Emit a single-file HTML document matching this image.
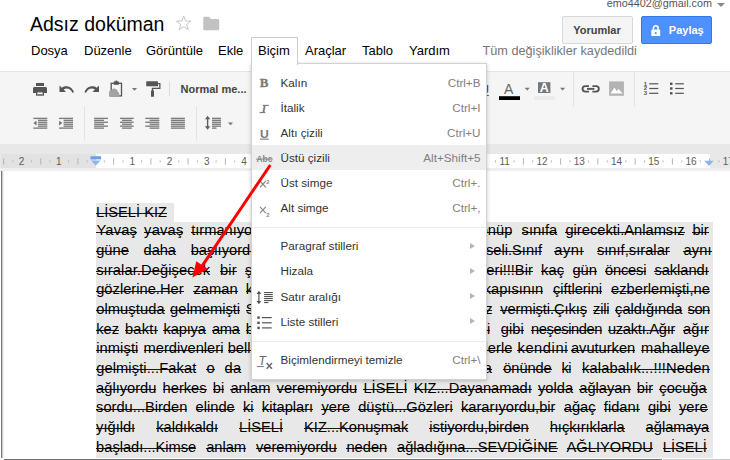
<!DOCTYPE html>
<html lang="tr">
<head>
<meta charset="utf-8">
<title>Adsız doküman</title>
<style>
html,body{margin:0;padding:0;}
body{width:730px;height:460px;overflow:hidden;position:relative;background:#fff;font-family:"Liberation Sans",sans-serif;font-size:13px;color:#000;}
.abs{position:absolute;}
#email{right:18px;top:-3.8px;font-size:10.8px;color:#555;line-height:15px;white-space:nowrap;}
#emarrow{left:717px;top:3px;width:0;height:0;border-left:4px solid transparent;border-right:4px solid transparent;border-top:4px solid #888;}
#title{left:30px;top:11.7px;font-size:19.5px;line-height:24px;color:#000;white-space:nowrap;}
#star{left:174px;top:11px;font-size:17px;line-height:22px;color:#bbb;}
#folder{left:203px;top:16px;}
.btn{top:16px;height:26px;box-sizing:content-box;border:1px solid #d8d8d8;border-radius:2px;font-weight:bold;font-size:11px;line-height:26px;text-align:center;white-space:nowrap;}
#yorum{left:561.5px;width:69px;background:#f5f5f5;color:#444;}
#paylas{left:641px;width:69px;background:#4d90fe;border-color:#3079ed;color:#fff;}
#menubar{left:0;top:41px;height:20px;}
#menubar span{position:absolute;top:0;line-height:20px;font-size:13px;white-space:nowrap;color:#000;}
#saved{left:482.5px;top:41px;line-height:20px;font-size:12.7px;color:#777;white-space:nowrap;}
#toolbar{left:0;top:71px;width:730px;height:73px;background:#f5f5f5;border-top:1px solid #e5e5e5;box-sizing:border-box;}
#rulerbg{left:0;top:144px;width:730px;height:28px;background:linear-gradient(#e8e8e8 0,#e8e8e8 24px,#efefef 24px);}
#ruler{left:1px;top:154px;width:95px;height:14px;background:#e2e2e2;}
#rulerw{left:96px;top:154px;width:613.5px;height:14px;background:#fff;}
#page{left:0.6px;top:171.3px;width:740px;height:286.4px;background:#fff;border-left:1px solid #777;box-shadow:inset 2px 0 1.5px -1px rgba(0,0,0,.25);box-sizing:border-box;}
.sep{width:1px;background:#e0e0e0;}
.tbtxt{font-weight:bold;font-size:11px;color:#444;white-space:nowrap;line-height:14px;}
.ln{position:absolute;left:95.7px;width:617.3px;box-sizing:border-box;padding-left:0.4px;padding-right:3.8px;height:19.7px;line-height:19.7px;font-size:14.67px;white-space:nowrap;color:#000;}
.ln s{text-decoration:none;background:linear-gradient(#1a1a1a,#1a1a1a) 0 9.3px/100% 1px no-repeat;}
.ln span{display:block;}
.ln.a s{position:absolute;top:0;display:block;background-position:0 10.4px;}
.ln.j span{display:block;width:613.1px;text-align:justify;text-align-last:justify;white-space:normal;}
#menu{left:250.5px;top:63px;width:234.5px;height:315px;background:#fff;border:1px solid #d2d2d2;box-shadow:0 1px 4px rgba(0,0,0,.22);box-sizing:content-box;}
#tab{left:250.5px;top:37px;width:45.5px;height:27px;background:#fff;border:1px solid #cdcdcd;border-bottom:none;box-sizing:content-box;}
.mi{position:absolute;left:0;width:234px;height:25.14px;line-height:25.14px;font-size:11.7px;color:#333;white-space:nowrap;}
.mi .t{position:absolute;left:29px;top:0;}
.mi .k{position:absolute;right:5px;top:0;color:#808080;}
.mi .ar{position:absolute;right:11px;top:9.4px;width:0;height:0;border-top:3.2px solid transparent;border-bottom:3.2px solid transparent;border-left:5px solid #b6b6b6;}
.mi.hl{background:#eee;}
.mi .ic{position:absolute;left:0;top:0;width:30px;height:25px;}
.msep{position:absolute;left:0;width:234px;height:1px;background:#ebebeb;}
</style>
</head>
<body>
<div class="abs" id="email">emo4402@gmail.com</div>
<div class="abs" id="emarrow"></div>
<div class="abs" id="title">Adsız doküman</div>
<svg class="abs" style="left:0;top:0" width="240" height="40" viewBox="0 0 240 40"><polygon points="183.70,15.90 185.52,20.99 190.93,21.15 186.65,24.46 188.17,29.65 183.70,26.60 179.23,29.65 180.75,24.46 176.47,21.15 181.88,20.99" fill="none" stroke="#c6c6c6" stroke-width="1"/><path d="M203.300 17.800 Q203.300 16.800 204.300 16.800 H209 L211 19 H218.200 Q219.200 19 219.200 20 V29.200 Q219.200 30.200 218.200 30.200 H204.300 Q203.300 30.200 203.300 29.200 Z" fill="#c2c2c2"/></svg>
<div class="abs btn" id="yorum">Yorumlar</div>
<div class="abs btn" id="paylas"><svg width="9.5" height="11.5" viewBox="0 0 10 12" style="vertical-align:-2px;margin-right:8px;margin-left:2px"><path d="M2.500 5 V3.300 A2.500 2.500 0 0 1 7.500 3.300 V5" fill="none" stroke="#fff" stroke-width="1.700"/><rect x="0.300" y="4.800" width="9.400" height="7.200" rx="1" fill="#fff"/><circle cx="5" cy="8.300" r="1.100" fill="#4d90fe"/></svg>Paylaş</div>
<div class="abs" id="menubar">
<span style="left:31px">Dosya</span>
<span style="left:84px">Düzenle</span>
<span style="left:146px">Görüntüle</span>
<span style="left:218px">Ekle</span>
<span style="left:305px">Araçlar</span>
<span style="left:362px">Tablo</span>
<span style="left:409px">Yardım</span>
</div>
<div class="abs" id="saved">Tüm değişiklikler kaydedildi</div>
<div class="abs" id="toolbar"></div>
<div class="abs" id="rulerbg"></div>
<div class="abs" id="ruler"></div>
<div class="abs" id="rulerw"></div>
<div class="abs" id="page"></div>
<!--TB-->
<svg class="abs" style="left:0;top:0" width="730" height="172" viewBox="0 0 730 172"><g fill="#555"><rect x="36" y="83" width="8" height="3"/><path d="M34.5 87 H45.500 Q47 87 47 88.500 V93 H44 V91 H36 V93 H33 V88.500 Q33 87 34.500 87 Z"/><rect x="36.700" y="91.700" width="6.600" height="3.300" fill="#fff" stroke="#555" stroke-width="1.400"/></g>
<path d="M59.5 85.5 V92 H66 L63.600 89.600 C66.500 87.500 70.500 88.500 72.500 92.800 L74 92.300 C72 86.500 66 84.800 61.800 87.800 Z" fill="#555"/>
<path d="M99 85.500 V92 H92.500 L94.900 89.600 C92 87.500 88 88.500 86 92.800 L84.500 92.300 C86.500 86.500 92.500 84.800 96.700 87.800 Z" fill="#555"/>
<g><rect x="111.200" y="83.300" width="10.300" height="12.600" fill="none" stroke="#555" stroke-width="1.300"/><rect x="113.800" y="81.400" width="5" height="3.400" fill="#555"/><rect x="115.400" y="80.600" width="1.800" height="1.500" fill="#555"/><path d="M109 96.800 V92 Q109.300 90 111.300 90.200 Q112.600 87.800 115.200 88.800 Q117.600 89.200 117.800 91.600 Q119.600 92.600 119.400 96.800 Z" fill="#a3a3a3"/></g>
<path d="M131.9 88.0 h5.2 l-2.6 2.8 z" fill="#777"/>
<g fill="#555"><rect x="146.200" y="81.300" width="11.800" height="5" rx="0.600"/><path d="M158 83 H160.500 V89 H153.200 V91 H151.800 V87.800 H159.200 V84.200 H158 Z"/><rect x="151" y="90.500" width="3" height="6.200" rx="0.500"/></g>
<rect x="169" y="81.500" width="1" height="14.500" fill="#dcdcdc"/>
<rect x="499" y="96.200" width="21" height="3.800" fill="#000"/>
<path d="M524.6 87.8 h5.2 l-2.6 2.8 z" fill="#777"/>
<rect x="538" y="82.200" width="12.400" height="10.800" fill="#777"/>
<rect x="534.200" y="96.200" width="20.600" height="3.800" fill="#ebebeb"/>
<path d="M560.0 87.8 h5.2 l-2.6 2.8 z" fill="#777"/>
<rect x="573" y="72" width="1" height="34.500" fill="#e3e3e3"/>
<g fill="none" stroke="#555" stroke-width="1.900"><path d="M589 86.100 H585.300 A2.750 2.750 0 0 0 585.300 91.600 H589"/><path d="M592.400 86.100 H596.100 A2.750 2.750 0 0 1 596.100 91.600 H592.400"/><path d="M587 88.850 H594.400"/></g>
<rect x="609.100" y="81.400" width="14.800" height="14.400" fill="#b3b3b3"/><path d="M610.500 93.500 L614.400 87.800 L616.800 91 L618.600 89 L622.600 93.500 Z" fill="#fff"/>
<rect x="634" y="72" width="1" height="34.500" fill="#e3e3e3"/>
<rect x="649.200" y="83.20" width="9.100" height="1.200" fill="#555"/>
<text x="643.800" y="85.70" font-family="Liberation Sans" font-weight="bold" font-size="6" fill="#555">1</text>
<rect x="649.200" y="87.90" width="9.100" height="1.200" fill="#555"/>
<text x="643.800" y="90.40" font-family="Liberation Sans" font-weight="bold" font-size="6" fill="#555">2</text>
<rect x="649.200" y="92.70" width="9.100" height="1.200" fill="#555"/>
<text x="643.800" y="95.20" font-family="Liberation Sans" font-weight="bold" font-size="6" fill="#555">3</text>
<rect x="675.200" y="83.20" width="8.600" height="1.200" fill="#555"/>
<rect x="670" y="82.60" width="2.500" height="2.400" fill="#555"/>
<rect x="675.200" y="87.90" width="8.600" height="1.200" fill="#555"/>
<rect x="670" y="87.30" width="2.500" height="2.400" fill="#555"/>
<rect x="675.200" y="92.70" width="8.600" height="1.200" fill="#555"/>
<rect x="670" y="92.10" width="2.500" height="2.400" fill="#555"/>
<rect x="33.30" y="117.70" width="14.00" height="1.35" fill="#7c7c7c"/><rect x="37.90" y="119.65" width="9.40" height="1.35" fill="#7c7c7c"/><rect x="37.90" y="121.60" width="9.40" height="1.35" fill="#7c7c7c"/><rect x="37.90" y="123.55" width="9.40" height="1.35" fill="#7c7c7c"/><rect x="37.90" y="125.50" width="9.40" height="1.35" fill="#7c7c7c"/><rect x="33.30" y="127.45" width="14.00" height="1.35" fill="#7c7c7c"/>
<path d="M36.500 120.700 V125.500 L33.500 123.100 Z" fill="#6a6a6a"/>
<rect x="59.00" y="117.70" width="14.00" height="1.35" fill="#7c7c7c"/><rect x="63.60" y="119.65" width="9.40" height="1.35" fill="#7c7c7c"/><rect x="63.60" y="121.60" width="9.40" height="1.35" fill="#7c7c7c"/><rect x="63.60" y="123.55" width="9.40" height="1.35" fill="#7c7c7c"/><rect x="63.60" y="125.50" width="9.40" height="1.35" fill="#7c7c7c"/><rect x="59.00" y="127.45" width="14.00" height="1.35" fill="#7c7c7c"/>
<path d="M59.200 120.700 V125.500 L62.200 123.100 Z" fill="#6a6a6a"/>
<rect x="84" y="106.500" width="1" height="34" fill="#e3e3e3"/>
<rect x="94.10" y="117.70" width="13.80" height="1.35" fill="#7c7c7c"/><rect x="94.10" y="119.65" width="9.90" height="1.35" fill="#7c7c7c"/><rect x="94.10" y="121.60" width="13.80" height="1.35" fill="#7c7c7c"/><rect x="94.10" y="123.55" width="9.90" height="1.35" fill="#7c7c7c"/><rect x="94.10" y="125.50" width="13.80" height="1.35" fill="#7c7c7c"/><rect x="94.10" y="127.45" width="9.90" height="1.35" fill="#7c7c7c"/>
<rect x="120.00" y="117.70" width="13.70" height="1.35" fill="#7c7c7c"/><rect x="122.00" y="119.65" width="9.80" height="1.35" fill="#7c7c7c"/><rect x="120.00" y="121.60" width="13.70" height="1.35" fill="#7c7c7c"/><rect x="122.00" y="123.55" width="9.80" height="1.35" fill="#7c7c7c"/><rect x="120.00" y="125.50" width="13.70" height="1.35" fill="#7c7c7c"/><rect x="122.00" y="127.45" width="9.80" height="1.35" fill="#7c7c7c"/>
<rect x="145.30" y="117.70" width="14.00" height="1.35" fill="#7c7c7c"/><rect x="149.60" y="119.65" width="9.70" height="1.35" fill="#7c7c7c"/><rect x="145.30" y="121.60" width="14.00" height="1.35" fill="#7c7c7c"/><rect x="149.60" y="123.55" width="9.70" height="1.35" fill="#7c7c7c"/><rect x="145.30" y="125.50" width="14.00" height="1.35" fill="#7c7c7c"/><rect x="149.60" y="127.45" width="9.70" height="1.35" fill="#7c7c7c"/>
<rect x="170.90" y="117.70" width="14.00" height="1.35" fill="#7c7c7c"/><rect x="170.90" y="119.65" width="14.00" height="1.35" fill="#7c7c7c"/><rect x="170.90" y="121.60" width="14.00" height="1.35" fill="#7c7c7c"/><rect x="170.90" y="123.55" width="14.00" height="1.35" fill="#7c7c7c"/><rect x="170.90" y="125.50" width="14.00" height="1.35" fill="#7c7c7c"/><rect x="170.90" y="127.45" width="14.00" height="1.35" fill="#7c7c7c"/>
<rect x="196" y="106.500" width="1" height="34" fill="#e3e3e3"/>
<path d="M207.600 115.800 L210.300 119.300 H208.300 V126.300 H210.300 L207.600 129.800 L204.900 126.300 H206.900 V119.300 H204.900 Z" fill="#606060"/>
<rect x="212.00" y="117.70" width="9.00" height="1.35" fill="#7c7c7c"/><rect x="212.00" y="119.65" width="9.00" height="1.35" fill="#7c7c7c"/><rect x="212.00" y="121.60" width="9.00" height="1.35" fill="#7c7c7c"/><rect x="212.00" y="123.55" width="9.00" height="1.35" fill="#7c7c7c"/><rect x="212.00" y="125.50" width="9.00" height="1.35" fill="#7c7c7c"/><rect x="212.00" y="127.45" width="4.50" height="1.35" fill="#7c7c7c"/>
<path d="M227.9 122.5 h5.2 l-2.6 2.8 z" fill="#777"/></svg>
<div class="abs tbtxt" style="left:180.500px;top:82.300px">Normal me...</div>
<div class="abs" style="left:504px;top:80.500px;font-size:14px;line-height:16px;color:#666">A</div>
<div class="abs" style="left:539.700px;top:81.800px;font-size:12.500px;line-height:12px;color:#fff;font-weight:bold">A</div>
<div class="abs" style="left:479.400px;top:81.500px;font-size:13px;line-height:16px;color:#555;font-weight:bold;text-decoration:underline">U</div>
<!--/TB-->
<!--RU--><svg class="abs" style="left:0;top:0" width="730" height="172" viewBox="0 0 730 172"><rect x="3.15" y="158.400" width="1" height="6.200" fill="#b4b4b4"/>
<rect x="12.42" y="160.300" width="1" height="2.200" fill="#bcbcbc"/>
<rect x="30.98" y="160.300" width="1" height="2.200" fill="#bcbcbc"/>
<rect x="40.25" y="158.400" width="1" height="6.200" fill="#b4b4b4"/>
<rect x="49.53" y="160.300" width="1" height="2.200" fill="#bcbcbc"/>
<rect x="68.08" y="160.300" width="1" height="2.200" fill="#bcbcbc"/>
<rect x="77.35" y="158.400" width="1" height="6.200" fill="#b4b4b4"/>
<rect x="86.62" y="160.300" width="1" height="2.200" fill="#bcbcbc"/>
<rect x="103.81" y="160.300" width="1" height="2.200" fill="#bcbcbc"/>
<rect x="113.12" y="158.400" width="1" height="6.200" fill="#b4b4b4"/>
<rect x="122.44" y="160.300" width="1" height="2.200" fill="#bcbcbc"/>
<rect x="141.06" y="160.300" width="1" height="2.200" fill="#bcbcbc"/>
<rect x="150.38" y="158.400" width="1" height="6.200" fill="#b4b4b4"/>
<rect x="159.69" y="160.300" width="1" height="2.200" fill="#bcbcbc"/>
<rect x="178.31" y="160.300" width="1" height="2.200" fill="#bcbcbc"/>
<rect x="187.62" y="158.400" width="1" height="6.200" fill="#b4b4b4"/>
<rect x="196.94" y="160.300" width="1" height="2.200" fill="#bcbcbc"/>
<rect x="215.56" y="160.300" width="1" height="2.200" fill="#bcbcbc"/>
<rect x="224.88" y="158.400" width="1" height="6.200" fill="#b4b4b4"/>
<rect x="234.19" y="160.300" width="1" height="2.200" fill="#bcbcbc"/>
<rect x="252.81" y="160.300" width="1" height="2.200" fill="#bcbcbc"/>
<rect x="262.12" y="158.400" width="1" height="6.200" fill="#b4b4b4"/>
<rect x="271.44" y="160.300" width="1" height="2.200" fill="#bcbcbc"/>
<rect x="290.06" y="160.300" width="1" height="2.200" fill="#bcbcbc"/>
<rect x="299.38" y="158.400" width="1" height="6.200" fill="#b4b4b4"/>
<rect x="308.69" y="160.300" width="1" height="2.200" fill="#bcbcbc"/>
<rect x="327.31" y="160.300" width="1" height="2.200" fill="#bcbcbc"/>
<rect x="336.62" y="158.400" width="1" height="6.200" fill="#b4b4b4"/>
<rect x="345.94" y="160.300" width="1" height="2.200" fill="#bcbcbc"/>
<rect x="364.56" y="160.300" width="1" height="2.200" fill="#bcbcbc"/>
<rect x="373.88" y="158.400" width="1" height="6.200" fill="#b4b4b4"/>
<rect x="383.19" y="160.300" width="1" height="2.200" fill="#bcbcbc"/>
<rect x="401.81" y="160.300" width="1" height="2.200" fill="#bcbcbc"/>
<rect x="411.12" y="158.400" width="1" height="6.200" fill="#b4b4b4"/>
<rect x="420.44" y="160.300" width="1" height="2.200" fill="#bcbcbc"/>
<rect x="439.06" y="160.300" width="1" height="2.200" fill="#bcbcbc"/>
<rect x="448.38" y="158.400" width="1" height="6.200" fill="#b4b4b4"/>
<rect x="457.69" y="160.300" width="1" height="2.200" fill="#bcbcbc"/>
<rect x="476.31" y="160.300" width="1" height="2.200" fill="#bcbcbc"/>
<rect x="485.62" y="158.400" width="1" height="6.200" fill="#b4b4b4"/>
<rect x="494.94" y="160.300" width="1" height="2.200" fill="#bcbcbc"/>
<rect x="513.56" y="160.300" width="1" height="2.200" fill="#bcbcbc"/>
<rect x="522.88" y="158.400" width="1" height="6.200" fill="#b4b4b4"/>
<rect x="532.19" y="160.300" width="1" height="2.200" fill="#bcbcbc"/>
<rect x="550.81" y="160.300" width="1" height="2.200" fill="#bcbcbc"/>
<rect x="560.12" y="158.400" width="1" height="6.200" fill="#b4b4b4"/>
<rect x="569.44" y="160.300" width="1" height="2.200" fill="#bcbcbc"/>
<rect x="588.06" y="160.300" width="1" height="2.200" fill="#bcbcbc"/>
<rect x="597.38" y="158.400" width="1" height="6.200" fill="#b4b4b4"/>
<rect x="606.69" y="160.300" width="1" height="2.200" fill="#bcbcbc"/>
<rect x="625.31" y="160.300" width="1" height="2.200" fill="#bcbcbc"/>
<rect x="634.62" y="158.400" width="1" height="6.200" fill="#b4b4b4"/>
<rect x="643.94" y="160.300" width="1" height="2.200" fill="#bcbcbc"/>
<rect x="662.56" y="160.300" width="1" height="2.200" fill="#bcbcbc"/>
<rect x="671.88" y="158.400" width="1" height="6.200" fill="#b4b4b4"/>
<rect x="681.19" y="160.300" width="1" height="2.200" fill="#bcbcbc"/>
<rect x="699.81" y="160.300" width="1" height="2.200" fill="#bcbcbc"/>
<rect x="709.12" y="158.400" width="1" height="6.200" fill="#b4b4b4"/>
<rect x="718.44" y="160.300" width="1" height="2.200" fill="#bcbcbc"/>
<text x="21.60" y="164.900" text-anchor="middle" font-family="Liberation Sans" font-size="10" fill="#5c5c5c">2</text>
<text x="58.70" y="164.900" text-anchor="middle" font-family="Liberation Sans" font-size="10" fill="#5c5c5c">1</text>
<text x="132.20" y="164.900" text-anchor="middle" font-family="Liberation Sans" font-size="10" fill="#5c5c5c">1</text>
<text x="169.45" y="164.900" text-anchor="middle" font-family="Liberation Sans" font-size="10" fill="#5c5c5c">2</text>
<text x="206.70" y="164.900" text-anchor="middle" font-family="Liberation Sans" font-size="10" fill="#5c5c5c">3</text>
<text x="243.95" y="164.900" text-anchor="middle" font-family="Liberation Sans" font-size="10" fill="#5c5c5c">4</text>
<text x="281.20" y="164.900" text-anchor="middle" font-family="Liberation Sans" font-size="10" fill="#5c5c5c">5</text>
<text x="318.45" y="164.900" text-anchor="middle" font-family="Liberation Sans" font-size="10" fill="#5c5c5c">6</text>
<text x="355.70" y="164.900" text-anchor="middle" font-family="Liberation Sans" font-size="10" fill="#5c5c5c">7</text>
<text x="392.95" y="164.900" text-anchor="middle" font-family="Liberation Sans" font-size="10" fill="#5c5c5c">8</text>
<text x="430.20" y="164.900" text-anchor="middle" font-family="Liberation Sans" font-size="10" fill="#5c5c5c">9</text>
<text x="467.45" y="164.900" text-anchor="middle" font-family="Liberation Sans" font-size="10" fill="#5c5c5c">10</text>
<text x="504.70" y="164.900" text-anchor="middle" font-family="Liberation Sans" font-size="10" fill="#5c5c5c">11</text>
<text x="541.95" y="164.900" text-anchor="middle" font-family="Liberation Sans" font-size="10" fill="#5c5c5c">12</text>
<text x="579.20" y="164.900" text-anchor="middle" font-family="Liberation Sans" font-size="10" fill="#5c5c5c">13</text>
<text x="616.45" y="164.900" text-anchor="middle" font-family="Liberation Sans" font-size="10" fill="#5c5c5c">14</text>
<text x="653.70" y="164.900" text-anchor="middle" font-family="Liberation Sans" font-size="10" fill="#5c5c5c">15</text>
<text x="690.95" y="164.900" text-anchor="middle" font-family="Liberation Sans" font-size="10" fill="#5c5c5c">16</text>
<text x="728.20" y="164.900" text-anchor="middle" font-family="Liberation Sans" font-size="10" fill="#5c5c5c">17</text>
<rect x="90.500" y="156.200" width="10.600" height="3.200" fill="#6d9eeb"/>
<path d="M91 160.600 H100.600 L95.800 165.600 Z" fill="#8ab4f8"/>
<path d="M704.200 160.800 H713.800 L709 166 Z" fill="#8ab4f8"/></svg><!--/RU-->
<div class="abs" style="left:3.7px;top:458.6px;width:658.8px;height:1.4px;background:#737373"></div><div class="abs" style="left:662.5px;top:458.6px;width:68px;height:1.4px;background:#c6c6c6"></div>
<div id="doc">
<div class="abs" style="left:95.7px;top:203px;width:78.3px;height:20px;background:#e8e8e8"></div><div class="abs" style="left:95.7px;top:222.2px;width:617.3px;height:235.5px;background:#e8e8e8"></div>
<div class="ln" style="top:203.37px;width:78.3px"><span class="l"><s style="background-position:0 8.4px">LİSELİ KIZ</s></span></div>
<div class="ln a" style="top:221.12px"><s style="left:0.7px;letter-spacing:0.21px">Yavaş</s> <s style="left:48.4px;letter-spacing:0.22px">yavaş</s> <s style="left:95.5px">tırmanıyordu</s> <s class="m" style="left:204.3px">merdivenleri,birazdan</s> <s style="right:200.7px">dönüp</s> <s style="left:425.9px;letter-spacing:-0.03px">sınıfa</s> <s style="left:469.7px;letter-spacing:0.02px">girecekti.Anlamsız</s> <s style="left:596.7px;letter-spacing:-0.03px">bir</s></div>
<div class="ln a" style="top:240.82px"><s style="left:0.5px;letter-spacing:0.02px">güne</s> <s style="left:47.9px;letter-spacing:-0.08px">daha</s> <s style="left:95.0px">başlıyordu</s> <s class="m" style="left:204.3px">yine bizim</s> <s style="right:170.8px">Liseli.Sınıf</s> <s style="left:458.6px;letter-spacing:0.45px">aynı</s> <s style="left:501.2px;letter-spacing:0.03px">sınıf,sıralar</s> <s style="left:587.8px;letter-spacing:0.12px">aynı</s></div>
<div class="ln a" style="top:260.52px"><s style="left:0.5px;letter-spacing:0.10px">sıralar.Değişecek</s> <s style="left:124.3px;letter-spacing:0.23px">bir</s> <s style="left:149.2px">şey</s> <s class="m" style="left:204.3px">yoktu sadece</s> <s style="right:180.2px">yerleri!!!Bir</s> <s style="left:445.4px;letter-spacing:0.13px">kaç</s> <s style="left:476.9px;letter-spacing:-0.12px">gün</s> <s style="left:509.4px;letter-spacing:-0.21px">öncesi</s> <s style="left:558.8px;letter-spacing:-0.06px">saklandı</s></div>
<div class="ln a" style="top:280.22px"><s style="left:0.5px;letter-spacing:0.02px">gözlerine.Her</s> <s style="left:97.7px;letter-spacing:0.10px">zaman</s> <s style="left:150.1px">ki</s> <s class="m" style="left:204.3px">gibi okulun</s> <s style="right:169.8px">kapısının</s> <s style="left:457.4px;letter-spacing:-0.07px">çiftlerini</s> <s style="left:515.4px;letter-spacing:0.01px">ezberlemişti,ne</s></div>
<div class="ln a" style="top:299.93px"><s style="left:0.5px;letter-spacing:0.09px">olmuştuda</s> <s style="left:74.4px;letter-spacing:-0.00px">gelmemişti</s> <s style="left:150.1px">Sevdiği</s> <s class="m" style="left:204.3px">oysa ona</s> <s style="right:220.5px">söz</s> <s style="left:404.5px;letter-spacing:-0.08px">vermişti.Çıkış</s> <s style="left:497.4px;letter-spacing:-0.23px">zili</s> <s style="left:519.4px;letter-spacing:-0.03px">çaldığında</s> <s style="left:591.9px;letter-spacing:-0.48px">son</s></div>
<div class="ln a" style="top:319.62px"><s style="left:0.5px;letter-spacing:0.06px">kez</s> <s style="left:29.2px;letter-spacing:0.24px">baktı</s> <s style="left:67.8px;letter-spacing:-0.15px">kapıya</s> <s style="left:116.2px;letter-spacing:-0.24px">ama</s> <s style="left:150.1px">bu</s> <s class="m" style="left:204.3px">sefer hiç</s> <s style="right:222.8px">eskisi</s> <s style="left:405.1px;letter-spacing:0.07px">gibi</s> <s style="left:435.3px;letter-spacing:-0.39px">neşesinden</s> <s style="left:512.2px;letter-spacing:-0.25px">uzaktı.Ağır</s> <s style="left:587.2px;letter-spacing:0.26px">ağır</s></div>
<div class="ln a" style="top:339.32px"><s style="left:0.5px;letter-spacing:0.10px">inmişti</s> <s style="left:47.9px;letter-spacing:-0.00px">merdivenleri</s> <s style="left:132.0px">belli</s> <s class="m" style="left:204.3px">belirsiz</s> <s style="right:200.7px">hayallerle</s> <s style="left:421.8px;letter-spacing:0.58px">kendini</s> <s style="left:475.3px;letter-spacing:-0.02px">avuturken</s> <s style="left:545.3px;letter-spacing:0.22px">mahalleye</s></div>
<div class="ln a" style="top:359.03px"><s style="left:0.5px;letter-spacing:0.10px">gelmişti...Fakat</s> <s style="left:110.8px;letter-spacing:0.14px">o</s> <s style="left:128.9px;letter-spacing:0.29px">da</s> <s style="left:157.7px">ne</s> <s class="m" style="left:204.3px">evinin</s> <s style="right:221.2px">kapısına</s> <s style="left:407.6px;letter-spacing:-0.09px">önünde</s> <s style="left:465.9px;letter-spacing:-0.60px">ki</s> <s style="left:486.4px;letter-spacing:0.11px">kalabalık...!!!Neden</s></div>
<div class="ln j" style="top:378.72px"><span style="width:610.6px"><s>ağlıyordu</s> <s>herkes</s> <s>bi</s> <s>anlam</s> <s>veremiyordu</s> <s>LİSELİ</s> <s>KIZ...Dayanamadı</s> <s>yolda</s> <s>ağlayan</s> <s>bir</s> <s>çocuğa</s></span></div>
<div class="ln j" style="top:398.43px"><span style="width:611.5px"><s>sordu...Birden</s> <s>elinde</s> <s>ki</s> <s>kitapları</s> <s>yere</s> <s>düştü...Gözleri</s> <s>kararıyordu,bir</s> <s>ağaç</s> <s>fidanı</s> <s>gibi</s> <s>yere</s></span></div>
<div class="ln j" style="top:418.12px"><span style="width:613.1px"><s>yığıldı</s> <s>kaldıkaldı</s> <s>LİSELİ</s> <s>KIZ...Konuşmak</s> <s>istiyordu,birden</s> <s>hıçkırıklarla</s> <s>ağlamaya</s></span></div>
<div class="ln j" style="top:437.82px"><span style="width:610.7px"><s>başladı...Kimse</s> <s>anlam</s> <s>veremiyordu</s> <s>neden</s> <s>ağladığına...SEVDİĞİNE</s> <s>AĞLIYORDU</s> <s>LİSELİ</s></span></div>
</div>
<div class="abs" id="menu">
<div class="mi" style="top:5.50px"><span class="ic" id="ic0"></span><span class="t">Kalın</span><span class="k">Ctrl+B</span></div>
<div class="mi" style="top:30.64px"><span class="ic" id="ic1"></span><span class="t">İtalik</span><span class="k">Ctrl+I</span></div>
<div class="mi" style="top:55.78px"><span class="ic" id="ic2"></span><span class="t">Altı çizili</span><span class="k">Ctrl+U</span></div>
<div class="mi hl" style="top:80.92px"><span class="ic" id="ic3"></span><span class="t">Üstü çizili</span><span class="k">Alt+Shift+5</span></div>
<div class="mi" style="top:106.06px"><span class="ic" id="ic4"></span><span class="t">Üst simge</span><span class="k">Ctrl+.</span></div>
<div class="mi" style="top:131.20px"><span class="ic" id="ic5"></span><span class="t">Alt simge</span><span class="k">Ctrl+,</span></div>
<div class="msep" style="top:163.30px"></div>
<div class="mi" style="top:169.34px"><span class="ic" id="ic6"></span><span class="t">Paragraf stilleri</span><span class="ar"></span></div>
<div class="mi" style="top:194.48px"><span class="ic" id="ic7"></span><span class="t">Hizala</span><span class="ar"></span></div>
<div class="mi" style="top:219.62px"><span class="ic" id="ic8"></span><span class="t">Satır aralığı</span><span class="ar"></span></div>
<div class="mi" style="top:244.76px"><span class="ic" id="ic9"></span><span class="t">Liste stilleri</span><span class="ar"></span></div>
<div class="msep" style="top:276.80px"></div>
<div class="mi" style="top:282.90px"><span class="ic" id="ic10"></span><span class="t">Biçimlendirmeyi temizle</span><span class="k">Ctrl+\</span></div>
</div>
<div class="abs" id="tab"></div>
<div class="abs" style="left:258px;top:40.5px;line-height:20px;font-size:13px;">Biçim</div>
<!--MI--><svg class="abs" style="left:0;top:0" width="730" height="460" viewBox="0 0 730 460"><text x="259.800" y="87.300" font-family="Liberation Serif" font-weight="bold" font-size="13" fill="#7a7a7a" stroke="#7a7a7a" stroke-width="0.35" textLength="8.600" lengthAdjust="spacingAndGlyphs">B</text>
<text x="261.400" y="113" font-family="Liberation Serif" font-style="italic" font-weight="bold" font-size="12.300" fill="#7a7a7a">I</text><rect x="263.200" y="104.850" width="5.600" height="1.100" fill="#7a7a7a"/><rect x="259.600" y="111.950" width="5.600" height="1.100" fill="#7a7a7a"/>
<text x="260" y="137.600" font-family="Liberation Sans" font-weight="bold" font-size="11.500" fill="#7a7a7a" textLength="8.800" lengthAdjust="spacingAndGlyphs">U</text>
<rect x="260" y="138.600" width="8.800" height="1.100" fill="#7a7a7a"/>
<text x="256.600" y="162" font-family="Liberation Sans" font-weight="bold" font-size="8.300" fill="#858585">Abc</text>
<rect x="256" y="158.600" width="16.800" height="1" fill="#8a8a8a"/>
<path d="M260.0 181.0 L265.8 187.4 M265.8 181.0 L260.0 187.4" stroke="#8a8a8a" stroke-width="1.2" fill="none"/>
<text x="266.300" y="184.200" font-family="Liberation Sans" font-weight="bold" font-size="6" fill="#8a8a8a">2</text>
<path d="M260.0 206.8 L265.8 213.2 M265.8 206.8 L260.0 213.2" stroke="#8a8a8a" stroke-width="1.2" fill="none"/>
<text x="266.300" y="217" font-family="Liberation Sans" font-weight="bold" font-size="6" fill="#8a8a8a">2</text>
<path d="M258.900 290.800 L261.300 294 H259.500 V301 H261.300 L258.900 304.200 L256.500 301 H258.300 V294 H256.500 Z" fill="#555"/>
<rect x="264.100" y="292.00" width="8.7" height="1.100" fill="#555"/>
<rect x="264.100" y="294.00" width="8.7" height="1.100" fill="#555"/>
<rect x="264.100" y="296.00" width="8.7" height="1.100" fill="#555"/>
<rect x="264.100" y="298.00" width="8.7" height="1.100" fill="#555"/>
<rect x="264.100" y="300.00" width="8.7" height="1.100" fill="#555"/>
<rect x="264.100" y="302.00" width="4.4" height="1.100" fill="#555"/>
<rect x="257.300" y="316.40" width="2.500" height="2.400" fill="#555"/>
<rect x="262" y="317.00" width="9.700" height="1.200" fill="#555"/>
<rect x="257.300" y="321.60" width="2.500" height="2.400" fill="#555"/>
<rect x="262" y="322.20" width="9.700" height="1.200" fill="#555"/>
<rect x="257.300" y="326.70" width="2.500" height="2.400" fill="#555"/>
<rect x="262" y="327.30" width="9.700" height="1.200" fill="#555"/>
<text x="258.600" y="365.200" font-family="Liberation Sans" font-style="italic" font-size="12" fill="#666">T</text>
<rect x="256.800" y="366.100" width="7" height="1" fill="#777"/>
<path d="M266.6 363.0 L272.0 368.8 M272.0 363.0 L266.6 368.8" stroke="#666" stroke-width="1.4" fill="none"/></svg><!--/MI-->
<svg class="abs" style="left:0;top:0;pointer-events:none" width="730" height="460" viewBox="0 0 730 460"><path d="M270.300 165 L201.500 266.800" stroke="#f00" stroke-width="3" fill="none"/><path d="M192.400 277.600 L196.300 261.300 L208 269 Z" fill="#f00"/></svg>
</body>
</html>
